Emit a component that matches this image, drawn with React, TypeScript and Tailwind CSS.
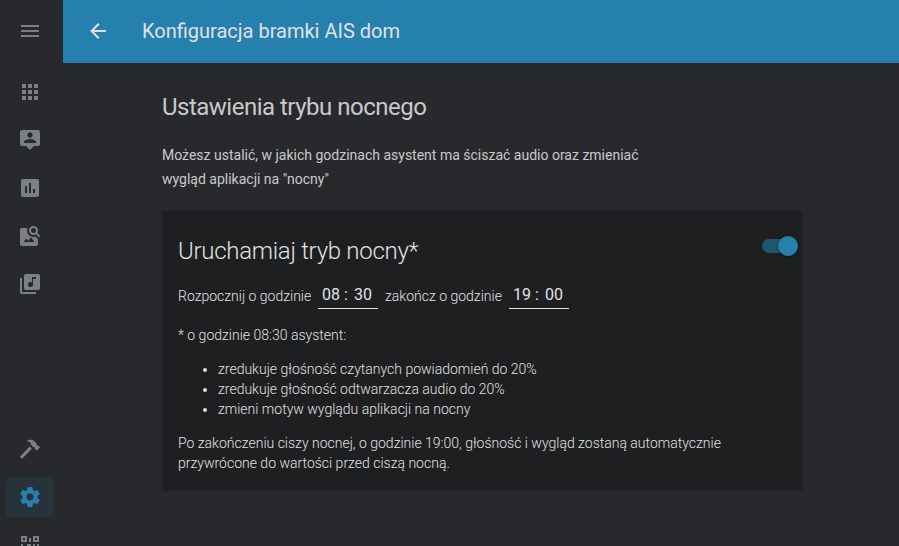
import React from "react";

const icons = {
  menu: "M3,6H21V8H3V6M3,11H21V13H3V11M3,16H21V18H3V16Z",
  back: "M20,11V13H8L13.5,18.5L12.08,19.92L4.16,12L12.08,4.08L13.5,5.5L8,11H20Z",
  apps: "M16,20H20V16H16M16,14H20V10H16M10,8H14V4H10M16,8H20V4H16M10,14H14V10H10M4,14H8V10H4M4,20H8V16H4M10,20H14V16H10M4,8H8V4H4V8Z",
  account:
    "M20,2A2,2 0 0,1 22,4V16A2,2 0 0,1 20,18H16L12,22L8,18H4A2,2 0 0,1 2,16V4A2,2 0 0,1 4,2H20M12,4.3C10.5,4.3 9.3,5.5 9.3,7C9.3,8.5 10.5,9.7 12,9.7C13.5,9.7 14.7,8.5 14.7,7C14.7,5.5 13.5,4.3 12,4.3M18,15V14.1C18,12.1 14,11 12,11C10,11 6,12.1 6,14.1V15H18Z",
  poll: "M19,3H5C3.9,3 3,3.9 3,5V19C3,20.1 3.9,21 5,21H19C20.1,21 21,20.1 21,19V5C21,3.9 20.1,3 19,3M9,17H7V10H9V17M13,17H11V7H13V17M17,17H15V13H17V17Z",
  imageSearch:
    "M15.5,9C16.2,9 16.79,8.76 17.27,8.27C17.76,7.79 18,7.2 18,6.5C18,5.83 17.76,5.23 17.27,4.73C16.79,4.23 16.2,4 15.5,4C14.83,4 14.23,4.23 13.73,4.73C13.23,5.23 13,5.83 13,6.5C13,7.2 13.23,7.79 13.73,8.27C14.23,8.76 14.83,9 15.5,9M19.31,8.91L22.41,12L21,13.41L17.86,10.31C17.08,10.78 16.28,11 15.47,11C14.22,11 13.16,10.58 12.3,9.7C11.45,8.83 11,7.77 11,6.5C11,5.27 11.45,4.2 12.33,3.33C13.2,2.45 14.27,2 15.5,2C16.77,2 17.83,2.45 18.7,3.33C19.58,4.2 20,5.27 20,6.5C20,7.33 19.78,8.13 19.31,8.91M16.5,18H5.5L8.25,14.5L10.22,16.83L12.94,13.31L16.5,18M18,13L20,15V20C20,20.55 19.81,21 19.41,21.4C19,21.79 18.53,22 18,22H4C3.45,22 3,21.79 2.6,21.4C2.21,21 2,20.55 2,20V6C2,5.47 2.21,5 2.6,4.59C3,4.19 3.45,4 4,4H9.5C9.2,4.64 9.03,5.46 9,6.47C9.06,8.33 9.7,9.87 10.92,11.09C12.14,12.31 13.67,12.96 15.5,13C16.39,13 17.22,12.83 18,12.5V13Z",
  music:
    "M20,2H8A2,2 0 0,0 6,4V16A2,2 0 0,0 8,18H20A2,2 0 0,0 22,16V4A2,2 0 0,0 20,2M18,7H15V12.5A2.5,2.5 0 0,1 12.5,15A2.5,2.5 0 0,1 10,12.5A2.5,2.5 0 0,1 12.5,10C13.07,10 13.58,10.19 14,10.5V5H18M4,6H2V20A2,2 0 0,0 4,22H18V20H4V6Z",
  hammer:
    "M11.6,9.4L14,11.8L4.6,21.2A1.5,1.5 0 0,1 2.5,19.1L11.6,9.4M9,4C11,2.4 14.2,2.4 16,4.1L18.5,6.6C18.9,7 18.9,7.6 18.7,8.1L19.5,8.9L20.2,8.4L22,10.3L18.7,13.5L16.8,11.7L17.3,11L16.5,10.2C16,10.4 15.5,10.3 15.1,9.9L12.8,7.6V6.3C12.2,4.9 10.6,4.3 9,4.6V4Z",
  cog: "M12,15.5A3.5,3.5 0 0,1 8.5,12A3.5,3.5 0 0,1 12,8.5A3.5,3.5 0 0,1 15.5,12A3.5,3.5 0 0,1 12,15.5M19.43,12.97C19.47,12.65 19.5,12.33 19.5,12C19.5,11.67 19.47,11.34 19.43,11L21.54,9.37C21.73,9.22 21.78,8.95 21.66,8.73L19.66,5.27C19.54,5.05 19.27,4.96 19.05,5.05L16.56,6.05C16.04,5.66 15.5,5.32 14.87,5.07L14.5,2.42C14.46,2.18 14.25,2 14,2H10C9.75,2 9.54,2.18 9.5,2.42L9.13,5.07C8.5,5.32 7.96,5.66 7.44,6.05L4.95,5.05C4.73,4.96 4.46,5.05 4.34,5.27L2.34,8.73C2.21,8.95 2.27,9.22 2.46,9.37L4.57,11C4.53,11.34 4.5,11.67 4.5,12C4.5,12.33 4.53,12.65 4.57,12.97L2.46,14.63C2.27,14.78 2.21,15.05 2.34,15.27L4.34,18.73C4.46,18.95 4.73,19.03 4.95,18.95L7.44,17.94C7.96,18.34 8.5,18.68 9.13,18.93L9.5,21.58C9.54,21.82 9.75,22 10,22H14C14.25,22 14.46,21.82 14.5,21.58L14.87,18.93C15.5,18.67 16.04,18.34 16.56,17.94L19.05,18.95C19.27,19.03 19.54,18.95 19.66,18.73L21.66,15.27C21.78,15.05 21.73,14.78 21.54,14.63L19.43,12.97Z",
  qrcode:
    "M3,11H5V13H3V11M11,5H13V9H11V5M9,11H13V15H11V13H9V11M15,11H17V13H19V11H21V13H19V15H21V19H19V21H17V19H13V21H11V17H15V15H17V13H15V11M19,19V15H17V19H19M15,3H21V9H15V3M17,5V7H19V5H17M3,3H9V9H3V3M5,5V7H7V5H5M3,15H9V21H3V15M5,17V19H7V17H5Z",
};

type IconName = keyof typeof icons;

function Icon({ name }: { name: IconName }) {
  return (
    <svg viewBox="0 0 24 24" className="size-6 shrink-0 fill-current">
      <path fillRule="evenodd" d={icons[name]} />
    </svg>
  );
}

function NavItem({ name, active = false }: { name: IconName; active?: boolean }) {
  return (
    <button
      className={
        active
          ? "flex h-10 w-12 shrink-0 items-center justify-center rounded bg-[#27323a] text-[#2680ad]"
          : "flex h-10 w-12 shrink-0 items-center justify-center rounded text-[#7b7f87]"
      }
    >
      <Icon name={name} />
    </button>
  );
}

function TimeField({ hour, minute }: { hour: string; minute: string }) {
  return (
    <div className="flex h-[29px] w-[60px] border-b border-[#e1e1e1] pl-1 pt-px text-base font-normal leading-7 text-[#e1e1e1]">
      <span className="w-[22px]">{hour}</span>
      <span className="w-[10px]">:</span>
      <span>{minute}</span>
    </div>
  );
}

export default function App() {
  return (
    <div className="flex h-[546px] w-full overflow-hidden bg-[#28292d] font-['Roboto',sans-serif] text-[#c9c9ca]">
      <aside className="flex w-[63px] shrink-0 flex-col pl-1.5">
        <div className="flex h-[62px] w-12 shrink-0 items-center justify-center text-[#7b7f87]">
          <Icon name="menu" />
        </div>
        <nav className="flex flex-col gap-2 pt-2.5">
          <NavItem name="apps" />
          <NavItem name="account" />
          <NavItem name="poll" />
          <NavItem name="imageSearch" />
          <NavItem name="music" />
        </nav>
        <nav className="mt-[125px] flex flex-col gap-2">
          <NavItem name="hammer" />
          <NavItem name="cog" active />
          <NavItem name="qrcode" />
        </nav>
      </aside>

      <main className="flex min-w-0 flex-1 flex-col">
        <header className="flex h-[63px] shrink-0 items-center bg-[#2680ad] pb-px pl-[23px] text-[#e1e1e1]">
          <Icon name="back" />
          <h1 className="ml-8 text-xl leading-6">Konfiguracja bramki AIS dom</h1>
        </header>

        <section className="ml-[99px] w-[640px] pt-7">
          <h2 className="text-2xl leading-8 tracking-[-0.021em]">Ustawienia trybu nocnego</h2>
          <p className="mt-5 w-[500px] text-sm leading-6">
            Możesz ustalić, w jakich godzinach asystent ma ściszać audio oraz zmieniać wygląd aplikacji na "nocny"
          </p>

          <div className="mt-5 h-[279px] rounded-[2px] bg-[#1e1f20] pl-4 text-sm font-light leading-5 text-[#e1e1e1] shadow-[0_1px_3px_0_rgba(0,0,0,0.2)]">
            <div className="flex items-start justify-between pr-1 pt-6">
              <h3 className="text-2xl font-light leading-8 tracking-[-0.012em]">Uruchamiaj tryb nocny*</h3>
              <div className="mt-px flex h-5 w-9 items-center">
                <div className="h-3.5 w-[22px] rounded-l-full bg-[#22566e]" />
                <div className="-ml-1.5 size-5 shrink-0 rounded-full bg-[#2680ad] shadow-[0_1px_3px_0_rgba(0,0,0,0.5)]" />
              </div>
            </div>

            <div className="mt-[13px] flex h-[29px] items-center">
              <span className="w-[140px] pt-0.5">Rozpocznij o godzinie</span>
              <TimeField hour="08" minute="30" />
              <span className="w-[131px] pl-[7px] pt-0.5">zakończ o godzinie</span>
              <TimeField hour="19" minute="00" />
            </div>

            <p className="mt-4">* o godzinie 08:30 asystent:</p>
            <ul className="mt-3.5 list-disc pl-10">
              <li>zredukuje głośność czytanych powiadomień do 20%</li>
              <li>zredukuje głośność odtwarzacza audio do 20%</li>
              <li>zmieni motyw wyglądu aplikacji na nocny</li>
            </ul>
            <p className="mt-3.5 w-[600px]">
              Po zakończeniu ciszy nocnej, o godzinie 19:00, głośność i wygląd zostaną automatycznie
              <br />
              przywrócone do wartości przed ciszą nocną.
            </p>
          </div>
        </section>
      </main>
    </div>
  );
}
